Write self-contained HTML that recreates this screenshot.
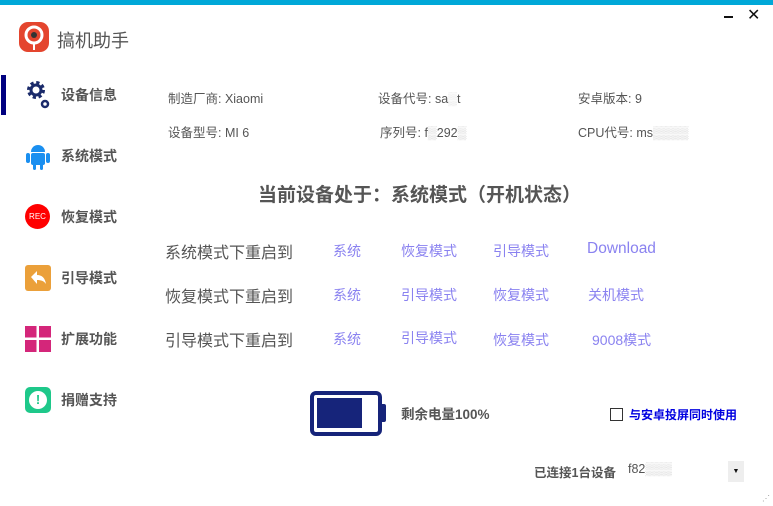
<!DOCTYPE html>
<html><head><meta charset="utf-8"><style>
*{margin:0;padding:0;box-sizing:border-box}
body{width:773px;height:506px;background:#fff;position:relative;overflow:hidden;font-family:"Liberation Sans","Noto Sans CJK SC",sans-serif;color:#555}
.a{position:absolute;white-space:nowrap}
.nav{font-size:14px;font-weight:bold;color:#555}
.inf{font-size:12.5px;color:#555}
.lb{font-size:16px;color:#555}
.lk{font-size:14px;color:#8a82f0}
</style></head><body>
<div class="a" style="left:0;top:0;width:773px;height:5px;background:#00a8d8"></div>
<div class="a" style="left:724px;top:16px;width:9px;height:2px;background:#111"></div>
<div class="a" style="left:747px;top:5px;font-size:16px;color:#111">✕</div>
<svg class="a" style="left:19px;top:22px" width="30" height="30" viewBox="0 0 30 30"><rect width="30" height="30" rx="9" fill="#e4452e"/><circle cx="15" cy="13" r="8" fill="none" stroke="#fff" stroke-width="3"/><circle cx="15" cy="13" r="3" fill="#333"/><rect x="14" y="20" width="2" height="8" fill="#fff"/></svg>
<div class="a" style="left:57px;top:27px;font-size:18px;color:#555">搞机助手</div>
<div class="a" style="left:1px;top:75px;width:5px;height:40px;background:#000080"></div>
<svg class="a" style="left:25px;top:80px" width="26" height="30" viewBox="0 0 26 30"><circle cx="11" cy="10" r="7" fill="none" stroke="#1a2a6a" stroke-width="4" stroke-dasharray="3 2.5"/><circle cx="11" cy="10" r="5" fill="none" stroke="#1a2a6a" stroke-width="3"/><circle cx="20" cy="24" r="3" fill="none" stroke="#1a2a6a" stroke-width="2.5"/></svg>
<div class="a nav" style="left:61px;top:85px">设备信息</div>
<svg class="a" style="left:25px;top:143px" width="26" height="28" viewBox="0 0 26 28"><path d="M6 9a7 7 0 0 1 14 0z" fill="#1a8ff0"/><rect x="6" y="10" width="14" height="12" rx="2" fill="#1a8ff0"/><rect x="1" y="10" width="4" height="10" rx="2" fill="#1a8ff0"/><rect x="21" y="10" width="4" height="10" rx="2" fill="#1a8ff0"/><rect x="8" y="20" width="3" height="7" rx="1.5" fill="#1a8ff0"/><rect x="15" y="20" width="3" height="7" rx="1.5" fill="#1a8ff0"/></svg>
<div class="a nav" style="left:61px;top:146px">系统模式</div>
<div class="a" style="left:25px;top:204px;width:25px;height:25px;border-radius:50%;background:#f00;color:#fff;font-size:8px;text-align:center;line-height:25px">REC</div>
<div class="a nav" style="left:61px;top:207px">恢复模式</div>
<div class="a" style="left:25px;top:265px;width:26px;height:26px;border-radius:3px;background:#eba03a"></div>
<svg class="a" style="left:25px;top:265px" width="26" height="26" viewBox="0 0 26 26"><path d="M6 12l6-6v4c5 0 8 3 9 9-2-3-5-4-9-4v4z" fill="#fff"/></svg>
<div class="a nav" style="left:61px;top:268px">引导模式</div>
<svg class="a" style="left:25px;top:326px" width="26" height="26"><rect x="0" y="0" width="11.5" height="11.5" fill="#d4267a"/><rect x="14" y="0" width="12" height="11.5" fill="#d4267a"/><rect x="0" y="14" width="11.5" height="12" fill="#d4267a"/><rect x="14" y="14" width="12" height="12" fill="#d4267a"/></svg>
<div class="a nav" style="left:61px;top:329px">扩展功能</div>
<div class="a" style="left:25px;top:387px;width:26px;height:26px;border-radius:5px;background:#1ec88a"></div>
<div class="a" style="left:29px;top:391px;width:18px;height:18px;border-radius:50%;background:#fff;color:#1ec88a;font-size:13px;font-weight:bold;text-align:center;line-height:18px">!</div>
<div class="a nav" style="left:61px;top:390px">捐赠支持</div>

<div class="a inf" style="left:168px;top:88px">制造厂商: Xiaomi</div>
<div class="a inf" style="left:378px;top:88px">设备代号: sa<span style="color:#ddd">▒</span>t</div>
<div class="a inf" style="left:578px;top:88px">安卓版本: 9</div>
<div class="a inf" style="left:168px;top:122px">设备型号: MI 6</div>
<div class="a inf" style="left:380px;top:122px">序列号: f<span style="color:#ccc">▒</span>292<span style="color:#ccc">▒</span></div>
<div class="a inf" style="left:578px;top:122px">CPU代号: ms<span style="color:#ccc">▒▒▒▒</span></div>

<div class="a" style="left:258px;top:180px;font-size:19px;font-weight:bold;color:#555">当前设备处于：系统模式（开机状态）</div>

<div class="a lb" style="left:165px;top:239px">系统模式下重启到</div>
<div class="a lk" style="left:333px;top:241px">系统</div>
<div class="a lk" style="left:401px;top:241px">恢复模式</div>
<div class="a lk" style="left:493px;top:241px">引导模式</div>
<div class="a lk" style="left:587px;top:240px;font-size:15.5px">Download</div>
<div class="a lb" style="left:165px;top:283px">恢复模式下重启到</div>
<div class="a lk" style="left:333px;top:285px">系统</div>
<div class="a lk" style="left:401px;top:285px">引导模式</div>
<div class="a lk" style="left:493px;top:285px">恢复模式</div>
<div class="a lk" style="left:588px;top:285px">关机模式</div>
<div class="a lb" style="left:165px;top:327px">引导模式下重启到</div>
<div class="a lk" style="left:333px;top:329px">系统</div>
<div class="a lk" style="left:401px;top:328px">引导模式</div>
<div class="a lk" style="left:493px;top:330px">恢复模式</div>
<div class="a lk" style="left:592px;top:330px">9008模式</div>

<div class="a" style="left:310px;top:391px;width:72px;height:45px;border:4px solid #16247a;border-radius:6px"></div>
<div class="a" style="left:382px;top:404px;width:4px;height:18px;background:#16247a;border-radius:0 2px 2px 0"></div>
<div class="a" style="left:317px;top:398px;width:45px;height:30px;background:#16247a"></div>
<div class="a" style="left:401px;top:403px;font-size:13.5px;font-weight:bold;color:#555">剩余电量100%</div>
<div class="a" style="left:610px;top:408px;width:13px;height:13px;border:1px solid #333"></div>
<div class="a" style="left:629px;top:406px;font-size:12px;font-weight:bold;color:#0000e0">与安卓投屏同时使用</div>
<div class="a" style="left:534px;top:462px;font-size:12.5px;font-weight:bold;color:#555">已连接1台设备</div>
<div class="a" style="left:628px;top:462px;font-size:12.5px;color:#555">f82<span style="color:#ccc">▒▒▒</span></div>
<div class="a" style="left:728px;top:461px;width:16px;height:21px;background:#eee;font-size:7px;color:#111;text-align:center;line-height:21px">▼</div>
<div class="a" style="left:762px;top:494px;font-size:8px;color:#999">⋰</div>
</body></html>
